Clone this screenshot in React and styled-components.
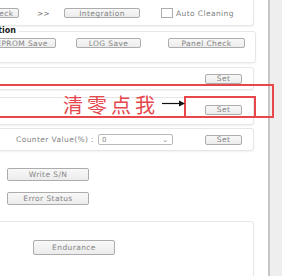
import React from 'react';
import styled, { createGlobalStyle } from 'styled-components';

const GlobalStyle = createGlobalStyle`
  html, body {
    margin: 0;
    padding: 0;
    background: #fff;
  }
  body {
    font-family: "DejaVu Sans", "Noto Sans", sans-serif;
  }
`;

const Frame = styled.div`
  position: relative;
  width: 282px;
  height: 276px;
  display: flex;
  overflow: hidden;
`;

const Main = styled.div`
  width: 268px;
  height: 100%;
  overflow: hidden;
  border-right: 2px solid #c6c6c6;
`;

const Side = styled.div`
  flex: 1;
  background: #eeeeee;
`;

const Content = styled.div`
  margin-left: -30px;
  margin-top: -6px;
  width: 284px;
  display: flex;
  flex-direction: column;
`;

const Card = styled.div`
  box-sizing: border-box;
  height: ${p => p.h}px;
  margin-top: ${p => p.mt || 0}px;
  padding: ${p => p.pad || '0 11px 0 12px'};
  border: 1px solid #e6e6e6;
  border-radius: 3px;
  box-shadow: 0 1px 2px rgba(0, 0, 0, 0.06);
  background: #fff;
  display: flex;
  align-items: center;
`;

const Group = styled.fieldset`
  box-sizing: border-box;
  height: 36px;
  margin: 1px 0 0;
  padding: 3px 10px 0 0;
  border: 1px solid #e6e6e6;
  border-radius: 3px;
  box-shadow: 0 1px 2px rgba(0, 0, 0, 0.06);
  display: flex;
  align-items: center;
  gap: 20px;
`;

const Legend = styled.legend`
  padding: 0 3px 0 0;
  margin-left: 0;
  font-size: 8px;
  font-weight: bold;
  color: #222;
  line-height: 8px;
`;

const Button = styled.div`
  box-sizing: border-box;
  width: ${p => p.w}px;
  height: ${p => p.hgt || 10}px;
  margin-left: ${p => p.ml || 0}px;
  border: 1px solid #acacac;
  border-radius: 2px;
  background: linear-gradient(#f8f8f8, #ececec);
  color: #858585;
  font-size: 7.5px;
  letter-spacing: 0.4px;
  display: flex;
  align-items: center;
  justify-content: center;
  white-space: nowrap;
  flex-shrink: 0;
`;

const Arrows = styled.span`
  margin-left: 18px;
  width: 11px;
  font-size: 7.5px;
  color: #707070;
`;

const Check = styled.span`
  margin-left: 21px;
  width: 10px;
  height: 8px;
  border: 1px solid #acacac;
  background: #fff;
  flex-shrink: 0;
`;

const Label = styled.span`
  margin-left: ${p => p.ml || 0}px;
  font-size: 7.5px;
  letter-spacing: 0.4px;
  color: #808080;
  white-space: nowrap;
`;

const Spacer = styled.div`
  flex: 1;
`;

const Select = styled.div`
  box-sizing: border-box;
  margin-left: 4px;
  width: 75px;
  height: 11px;
  border: 1px solid #b8b8b8;
  border-radius: 2px;
  background: #fff;
  display: flex;
  align-items: center;
  justify-content: space-between;
  padding: 0 4px 0 3px;
  font-size: 7px;
  color: #888;
`;

const Loose = styled.div`
  display: flex;
  flex-direction: column;
  gap: 11px;
  padding: 17px 0 0 37px;
  height: 70px;
  box-sizing: border-box;
`;

const BottomCard = styled.div`
  height: 70px;
  border: 1px solid #e6e6e6;
  border-radius: 3px;
  box-shadow: 0 1px 2px rgba(0, 0, 0, 0.06);
  padding: 18px 0 0 62px;
  box-sizing: border-box;
`;

const RedBox = styled.div`
  position: absolute;
  left: ${p => p.x}px;
  top: ${p => p.y}px;
  width: ${p => p.w}px;
  height: ${p => p.h}px;
  box-sizing: border-box;
  border: 2px solid #e8464b;
  pointer-events: none;
`;

const Note = styled.div`
  position: absolute;
  left: 63px;
  top: 94px;
  font-family: "Noto Sans CJK SC", sans-serif;
  font-size: 20px;
  line-height: 22px;
  letter-spacing: 4px;
  color: #e5474c;
`;

const Arrow = styled.svg`
  position: absolute;
  left: 162px;
  top: 100px;
`;

export default function App() {
  return (
    <>
      <GlobalStyle />
      <Frame>
        <Main>
          <Content>
            <Card h={32} pad="6px 11px 0 12px">
              <Button w={36}>Check</Button>
              <Arrows>&gt;&gt;</Arrows>
              <Button w={76} ml={16}>Integration</Button>
              <Check />
              <Label ml={3}>Auto Cleaning</Label>
            </Card>
            <Group>
              <Legend>Operation</Legend>
              <Button w={73} ml={12}>EEPROM Save</Button>
              <Button w={65}>LOG Save</Button>
              <Button w={77} ml={7}>Panel Check</Button>
            </Group>
            <Card h={23} mt={4}>
              <Spacer />
              <Button w={37}>Set</Button>
            </Card>
            <Card h={28} mt={7} pad="0 11px 3px 12px">
              <Spacer />
              <Button w={37}>Set</Button>
            </Card>
            <Card h={23} mt={3}>
              <Label ml={33}>Counter Value(%) :</Label>
              <Select>
                <span>0</span>
                <span>⌄</span>
              </Select>
              <Spacer />
              <Button w={37}>Set</Button>
            </Card>
            <Loose>
              <Button w={82} hgt={13}>Write S/N</Button>
              <Button w={82} hgt={13}>Error Status</Button>
            </Loose>
            <BottomCard>
              <Button w={82} hgt={15}>Endurance</Button>
            </BottomCard>
          </Content>
        </Main>
        <Side />
        <RedBox x={-4} y={84} w={278} h={34} />
        <RedBox x={184} y={96} w={72} h={22} />
        <Note>清零点我</Note>
        <Arrow width="23" height="7" viewBox="0 0 23 7">
          <line x1="0" y1="3.5" x2="18" y2="3.5" stroke="#111" strokeWidth="1.2" />
          <polygon points="17,0.5 23,3.5 17,6.5" fill="#111" />
        </Arrow>
      </Frame>
    </>
  );
}
